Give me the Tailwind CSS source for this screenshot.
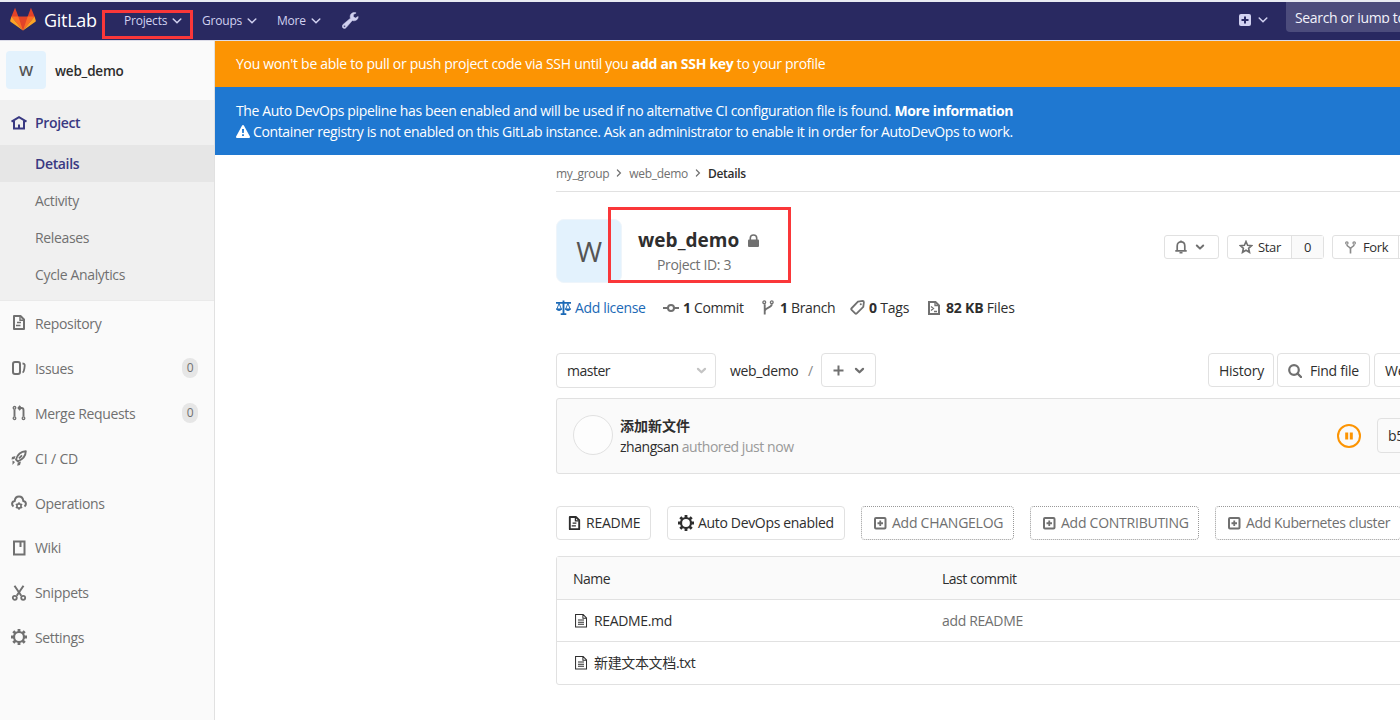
<!DOCTYPE html>
<html lang="en">
  <head>
    <meta charset="UTF-8" />
    <meta name="viewport" content="width=device-width, initial-scale=1.0" />
    <title>web_demo · GitLab</title>
    <script src="https://cdn.jsdelivr.net/npm/@tailwindcss/browser@4"></script>
  </head>
  <body class="relative h-screen overflow-hidden bg-white font-['Open_Sans','Noto_Sans_CJK_SC',sans-serif] text-sm tracking-[-0.35px] text-[#2e2e2e]">
    <!-- Icon sprite -->
    <svg class="hidden">
      <symbol id="chevron" viewBox="0 0 10 10"><path d="M1.2 3l3.8 3.8L8.800 3" fill="none" stroke="currentColor" stroke-width="1.5" stroke-linecap="round" /></symbol>
      <symbol id="angle" viewBox="0 0 10 10"><path d="M1.800 3.500l3.200 3.100 3.200-3.100" fill="none" stroke="currentColor" stroke-width="2" stroke-linecap="round" stroke-linejoin="round" /></symbol>
      <symbol id="doc" viewBox="0 0 16 16"><path d="M3 1h6.500L13 4.500V14H3z" fill="none" stroke="currentColor" stroke-width="2" stroke-linejoin="round" /><path d="M6 7.500h4M5 10.500h4.500M9 2v3.200h3" fill="none" stroke="currentColor" stroke-width="1.4" /></symbol>
      <symbol id="branch" viewBox="0 0 16 16"><g fill="none" stroke="currentColor" stroke-width="1.400"><circle cx="4" cy="2.500" r="1.500" /><circle cx="12" cy="2.500" r="1.500" /><path stroke-width="2" d="M4.500 4.500v11M12 4.500c0 4-6.500 3-7.500 7" /></g></symbol>
      <symbol id="gear" viewBox="0 0 16 16"><circle cx="8" cy="8" r="5" fill="none" stroke="currentColor" stroke-width="2.200" /><path d="M8 0v3M8 13v3M0 8h3M13 8h3M2.300 2.300l2 2M11.700 11.700l2 2M2.300 13.700l2-2M11.700 4.300l2-2" stroke="currentColor" stroke-width="2.800" /></symbol>
      <symbol id="plus-square" viewBox="0 0 16 16"><rect x="3" y="3" width="10.500" height="10.500" rx="1" fill="none" stroke="currentColor" stroke-width="2" /><path d="M8.250 5.500v5.500M5.500 8.250h5.500" stroke="currentColor" stroke-width="1.800" /></symbol>
      <symbol id="file-o" viewBox="0 0 14 15"><path d="M.6.6h8.200l3.600 3.600v9.800H.6zM8.500.6v4h4M3.200 6.500h6.500M3.200 8.800h6.500M3.200 11.100h6.500" fill="none" stroke="currentColor" stroke-width="1.100" /></symbol>
    </svg>

    <!-- Top navigation -->
    <header class="flex h-[41px] items-start border-t-2 border-b border-t-[#e8eaf2] border-b-[#dcdce8] bg-[#292961] text-[#d1d1f0]">
      <div class="flex h-[38px] w-[102px] items-center pl-[10px]">
        <svg class="-mt-1 h-6 w-[26px]" viewBox="0 0 36 33">
          <path fill="#e24329" d="M2 13l16 19.500L34 13 29 .800 24.500 13h-13L7 .800z" />
          <path fill="#fc6d26" d="M2 13L18 32.500 11.500 13zM34 13L18 32.500 24.500 13z" />
          <path fill="#fca326" d="M2 13L.3 18.500c-.2.700 0 1.300.500 1.700L18 32.500zM34 13l1.700 5.500c.2.700 0 1.300-.5 1.700L18 32.500z" />
        </svg>
        <span class="ml-2 text-[18px] tracking-[-0.3px] text-white">GitLab</span>
      </div>
      <nav class="flex h-[38px] items-center text-[12px] font-medium tracking-[-0.2px]">
        <a class="flex w-[80px] items-center gap-[5px] pl-[22px]">Projects <svg class="size-[10px] shrink-0"><use href="#chevron" /></svg></a>
        <a class="ml-[20px] flex w-[75px] items-center gap-[5px]">Groups <svg class="size-[10px] shrink-0"><use href="#chevron" /></svg></a>
        <a class="flex w-[64px] items-center gap-[5px]">More <svg class="size-[10px] shrink-0"><use href="#chevron" /></svg></a>
        <svg class="-mt-px ml-px size-[17px]" viewBox="0 0 16 16"><path d="M15.200 4.200l-2.600 1.500-1.900-1.200V2.400L13.300.900C11.500.100 9.400.600 8.300 2.200c-.7 1.200-.8 2.500-.3 3.600L1 11.700c-1 .9-1 2.300-.2 3.200.9.900 2.300.8 3.100-.2L9.700 8c1.400.5 3.100.2 4.300-.8 1-.900 1.300-2 1.200-3zM2.400 12.500a.9.900 0 1 1 0 1.800.9.900 0 0 1 0-1.800z" fill="currentColor" stroke="currentColor" stroke-width=".5" fill-rule="evenodd" /></svg>
      </nav>
      <div class="ml-auto flex h-full items-start">
        <svg class="mt-3 mr-[7px] h-3 w-3" viewBox="0 0 12 12"><rect width="12" height="12" rx="2" fill="currentColor" /><path d="M6 2.500v7M2.500 6h7" stroke="#292961" stroke-width="2" /></svg>
        <svg class="mt-[13px] mr-[18px] size-[10px]"><use href="#chevron" /></svg>
        <div class="h-[30px] w-[114px] overflow-hidden rounded-bl bg-[#4c4c7c] pt-[6px] pl-[9px] whitespace-nowrap text-[#f2f2fa]">
          <div class="h-[15px] overflow-hidden leading-[19px]">Search or jump to…</div>
        </div>
      </div>
    </header>

    <div class="flex h-[679px]">
      <!-- Sidebar -->
      <aside class="w-[215px] shrink-0 border-r border-[#e1e1e1] bg-[#fafafa] text-[#707070]">
        <div class="flex h-[59px] items-center pl-[6px] font-semibold text-[#2e2e2e]">
          <div class="-mt-[2px] flex h-[38px] w-10 items-center justify-center rounded bg-[#e3f2fd] pt-[3px] text-[15px] font-semibold text-[#555]">W</div>
          <span class="mt-[2px] ml-[9px] text-[13.500px] tracking-[-0.2px]">web_demo</span>
        </div>
        <div class="h-[201px] border-b border-[#eaeaea] bg-[#f0f0f0]">
          <a class="flex h-[45px] items-center gap-2 pl-[11px] font-semibold text-[#393982]">
            <svg class="size-4" viewBox="0 0 16 16"><path d="M.5 6.700L8 2.200l7.500 4.500M3 6v7.500h10V6M8 13V9.500" fill="none" stroke="currentColor" stroke-width="2" /></svg>
            Project
          </a>
          <a class="flex h-[37px] items-center bg-[#e6e6e6] pl-[35px] font-semibold text-[#393982]">Details</a>
          <a class="flex h-[37px] items-center pl-[35px]">Activity</a>
          <a class="flex h-[37px] items-center pl-[35px]">Releases</a>
          <a class="flex h-[37px] items-center pl-[35px]">Cycle Analytics</a>
        </div>
        <a class="mt-px flex h-[44.800px] items-center gap-2 pl-[11px]">
          <svg class="-mt-[2px] size-4"><use href="#doc" /></svg>
          Repository
        </a>
        <a class="flex h-[44.800px] items-center gap-2 pl-[11px]">
          <svg class="-mt-[2px] size-4" viewBox="0 0 16 16"><rect x="2" y="2" width="7" height="12" rx="2" fill="none" stroke="currentColor" stroke-width="2" /><path d="M11.500 3.500c2.500 0 2.500 1.500 2 4-.4 3-.5 4.500-2 5" fill="none" stroke="currentColor" stroke-width="1.800" /></svg>
          Issues
          <span class="-mt-[2px] mr-4 ml-auto flex h-5 w-4 items-center justify-center rounded-full bg-[#e6e6e6] text-xs">0</span>
        </a>
        <a class="flex h-[44.800px] items-center gap-2 pl-[11px]">
          <svg class="-mt-[2px] size-4" viewBox="0 0 16 16"><g fill="none" stroke="currentColor" stroke-width="1.300"><circle cx="3.500" cy="2.800" r="1.300" /><circle cx="3.500" cy="13.200" r="1.300" /><circle cx="12.500" cy="13.200" r="1.300" /><path stroke-width="1.900" d="M3.500 4.500v7M12.500 11.500V5c0-1.200-.8-2-2-2H8.500M9.300.800L7.500 3l1.800 2" /></g></svg>
          Merge Requests
          <span class="-mt-[2px] mr-4 ml-auto flex h-5 w-4 items-center justify-center rounded-full bg-[#e6e6e6] text-xs">0</span>
        </a>
        <a class="flex h-[44.800px] items-center gap-2 pl-[11px]">
          <svg class="-mt-px size-4" viewBox="0 0 16 16"><path d="M5 9.500C6.500 4.500 10 1.500 14.800 1.300 14.700 6 11.500 9.500 6.800 11.300zM8 8.300l3-3" fill="none" stroke="currentColor" stroke-width="1.900" stroke-linejoin="round" /><path d="M4.500 6L1 7l-.5 2.500 3-.5zM10 11.500L9 15l-2.800.7.6-3.200zM1.500 10.500L4 12l-2.500 3z" fill="currentColor" /></svg>
          <span class="tracking-[-0.15px]">CI / CD</span>
        </a>
        <a class="flex h-[44.800px] items-center gap-2 pl-[11px]">
          <svg class="-mt-px size-4" viewBox="0 0 16 16"><path d="M2.500 11.500C.5 10 .5 6.500 3.700 6 4.300 0 11.700 0 12.300 6c3.200.5 3.200 4 1.200 5.500" fill="none" stroke="currentColor" stroke-width="2" /><circle cx="8" cy="11" r="2.100" fill="none" stroke="currentColor" stroke-width="1.600" /><path d="M8 7.300v1.500M8 13.200v1.500M4.800 9.200l1.300.700M9.900 12.100l1.300.7M4.800 12.800l1.300-.7M9.900 9.900l1.300-.7" stroke="currentColor" stroke-width="1.500" /></svg>
          Operations
        </a>
        <a class="flex h-[44.800px] items-center gap-2 pl-[11px]">
          <svg class="-mt-px size-4" viewBox="0 0 16 16"><rect x="3" y="1.500" width="10.500" height="13" fill="none" stroke="currentColor" stroke-width="2" /><path d="M9.500 2v5" stroke="currentColor" stroke-width="2" /></svg>
          Wiki
        </a>
        <a class="flex h-[44.800px] items-center gap-2 pl-[11px]">
          <svg class="-mt-px size-4" viewBox="0 0 16 16"><path d="M3.500.800l6.800 10M12.500.800L5.700 10.800" stroke="currentColor" stroke-width="2" /><circle cx="3.800" cy="12.800" r="2" fill="none" stroke="currentColor" stroke-width="1.800" /><circle cx="12.200" cy="12.800" r="2" fill="none" stroke="currentColor" stroke-width="1.800" /></svg>
          Snippets
        </a>
        <a class="flex h-[44.800px] items-center gap-2 pl-[11px]">
          <svg class="-mt-px size-4"><use href="#gear" /></svg>
          Settings
        </a>
      </aside>

      <main class="flex-1 overflow-hidden whitespace-nowrap">
        <!-- Banners -->
        <div class="flex h-[46px] items-center bg-[#fc9403] pl-[21px] text-white">
          <p class="tracking-[-0.29px]">You won't be able to pull or push project code via SSH until you <b>add an SSH key</b> to your profile</p>
        </div>
        <div class="h-[68px] bg-[#1f78d1] pt-[13px] pl-[21px] leading-[21px] text-white">
          <p class="tracking-[-0.36px]">The Auto DevOps pipeline has been enabled and will be used if no alternative CI configuration file is found. <b>More information</b></p>
          <p class="flex items-center gap-[3px] tracking-[-0.37px]">
            <svg class="h-[13px] w-[14px]" viewBox="0 0 14 13"><path d="M7 0c.4 0 .7.200.9.500l6 11c.4.700-.1 1.500-.9 1.500H1c-.8 0-1.300-.8-.9-1.500l6-11C6.300.200 6.600 0 7 0zM6 4l.2 4h1.600L8 4zM6.100 9.200V11h1.800V9.200z" fill="currentColor" fill-rule="evenodd" /></svg>
            Container registry is not enabled on this GitLab instance. Ask an administrator to enable it in order for AutoDevOps to work.
          </p>
        </div>

        <div class="ml-[341px] w-[990px]">
          <!-- Breadcrumbs -->
          <div class="flex h-[37px] items-center border-b border-[#e1e1e1] pt-[2px] text-xs tracking-[-0.3px] text-[#707070]">
            <span>my_group</span>
            <svg class="-mt-[3px] mx-[6px] size-2 -rotate-90"><use href="#chevron" /></svg>
            <span>web_demo</span>
            <svg class="-mt-[3px] mx-[6px] size-2 -rotate-90"><use href="#chevron" /></svg>
            <span class="font-semibold text-[#2e2e2e]">Details</span>
          </div>

          <!-- Project header -->
          <div class="flex pt-[27px]">
            <div class="flex h-16 w-[66px] items-center justify-center rounded-lg border border-[#eef5fb] bg-[#e3f2fd] text-[28px] text-[#555]">W</div>
            <div class="ml-[16px] w-[526px] pt-[7px]">
              <h1 class="flex h-[29px] items-center text-[19px] font-bold tracking-[0.05px]">
                web_demo
                <svg class="ml-[9px] h-[13px] w-[11px] text-[#707070]" viewBox="0 0 11 13"><rect y="5.500" width="11" height="7.500" rx="1" fill="currentColor" /><path d="M2.300 6V4c0-4 6.400-4 6.400 0v2" fill="none" stroke="currentColor" stroke-width="1.600" /></svg>
              </h1>
              <p class="ml-[19px] leading-5 text-[#707070]">Project ID: 3</p>
            </div>
            <div class="mt-4 flex h-6 text-[13px]">
              <button class="flex w-[55px] items-center justify-center gap-2 rounded-[3px] border border-[#e1e1e1] text-[#707070]">
                <svg class="-ml-[3px] h-[14px] w-3" viewBox="0 0 12 14"><path d="M.3 10.900h11.400M2.200 10.500V6c0-5.500 7.600-5.500 7.600 0v4.500" fill="none" stroke="currentColor" stroke-width="1.700" /><path d="M4.500 12h3v1.500h-3zM5.200.500h1.600V2H5.200z" fill="currentColor" /></svg>
                <svg class="size-[10px]"><use href="#angle" /></svg>
              </button>
              <div class="ml-2 flex w-[97px] rounded-[3px] border border-[#e1e1e1]">
                <span class="flex w-[63px] items-center gap-[5px] pl-[11px]">
                  <svg class="size-[14px] shrink-0 text-[#707070]" viewBox="0 0 14 14"><path d="M7 1.500l1.600 3.700 4 .4-3 2.700.9 4L7 10.200l-3.500 2.100.9-4-3-2.700 4-.4z" fill="none" stroke="currentColor" stroke-width="1.600" /></svg>
                  Star
                </span>
                <span class="flex flex-1 items-center justify-center border-l border-[#e1e1e1] bg-[#fafafa]">0</span>
              </div>
              <div class="ml-2 flex w-[100px] rounded-[3px] border border-[#e1e1e1]">
                <span class="flex w-[66px] items-center gap-[6px] border-r border-[#e1e1e1] pl-[11px]"><svg class="size-[13px] shrink-0 text-[#8a8a8a]" viewBox="0 0 16 16"><g fill="none" stroke="currentColor" stroke-width="1.500"><circle cx="3.500" cy="2.500" r="1.500" /><circle cx="12.500" cy="2.500" r="1.500" /><path stroke-width="2" d="M3.500 4.500C4 8 8 6.500 8 10v5.500M12.500 4.500C12 8 8 6.500 8 10" /></g></svg>Fork</span>
              </div>
            </div>
          </div>

          <!-- Stats -->
          <div class="flex h-[35px] items-center pt-[15px]">
            <a class="flex w-[107px] items-center gap-1 text-[#1b69b6]">
              <svg class="-mt-px h-4 w-[15px]" viewBox="0 0 16 16"><path d="M0 2.500h16M8 0v14M5 14.500h6" stroke="currentColor" stroke-width="2" fill="none" /><path d="M3.300 3L.8 9.500h5zM12.700 3l-2.500 6.500h5z" stroke="currentColor" stroke-width="1" fill="none" /><path d="M0 8.500h6.500c-.5 3.500-6 3.500-6.500 0zM9.500 8.500H16c-.5 3.500-6 3.500-6.500 0z" fill="currentColor" /></svg>
              Add license
            </a>
            <a class="flex w-[98px] items-center gap-1">
              <svg class="-mt-px size-4 text-[#707070]" viewBox="0 0 16 16"><circle cx="8" cy="8" r="3" fill="none" stroke="currentColor" stroke-width="2" /><path d="M0 8h5M11 8h5" stroke="currentColor" stroke-width="2" /></svg>
              <span><b>1</b> Commit</span>
            </a>
            <a class="flex w-[89px] items-center gap-[3px]">
              <svg class="-mt-[2px] -ml-px mr-px h-[15px] w-4 text-[#707070]"><use href="#branch" /></svg>
              <span><b>1</b> Branch</span>
            </a>
            <a class="flex w-[77px] items-center gap-1 tracking-[-0.2px]">
              <svg class="-mt-px size-[15px] text-[#707070]" viewBox="0 0 16 16"><path d="M8.500 1.800l5-.8c.8 0 1.300.5 1.300 1.300l-.6 5-7 7c-.5.500-1.200.5-1.700 0L1.700 10.500c-.5-.5-.5-1.200 0-1.700z" fill="none" stroke="currentColor" stroke-width="1.900" /><circle cx="11.500" cy="4.500" r="1.100" fill="currentColor" /></svg>
              <span><b>0</b> Tags</span>
            </a>
            <a class="-ml-px flex items-center gap-1 tracking-[-0.2px]">
              <svg class="-mt-px size-4 text-[#707070]" viewBox="0 0 16 16"><path d="M3 2h6.500L13 5.500V14H3z" fill="none" stroke="currentColor" stroke-width="2" /><path d="M5 6.500l2.500 2L5 10.500M8 11.500h3M9 2v3.500h3" fill="none" stroke="currentColor" stroke-width="1.300" /></svg>
              <span><b>82 KB</b> Files</span>
            </a>
          </div>

          <!-- Tree controls -->
          <div class="mt-[35px] flex h-[35px]">
            <div class="flex w-[160px] items-center justify-between rounded border border-[#e1e1e1] pr-[8px] pl-[10px]">
              <span class="pt-px tracking-[-0.5px]">master</span>
              <svg class="size-[11px] text-[#c4c4c4]"><use href="#angle" /></svg>
            </div>
            <span class="ml-[14px] flex w-[78px] items-center">web_demo</span>
            <span class="flex w-[13px] items-center text-[#888]">/</span>
            <button class="flex h-[34px] w-[55px] items-center justify-center gap-[10px] rounded border border-[#e1e1e1] text-[#707070]">
              <svg class="size-[11px]" viewBox="0 0 11 11"><path d="M5.500.500v10M.5 5.500h10" stroke="currentColor" stroke-width="2" /></svg>
              <svg class="size-[11px]"><use href="#angle" /></svg>
            </button>
            <div class="ml-[332px] flex h-[34px] gap-[3px] tracking-[-0.25px]">
              <button class="flex w-[66px] shrink-0 items-center rounded border border-[#e1e1e1] pt-[2px] pl-[10px]">History</button>
              <button class="flex w-[93px] shrink-0 items-center gap-2 rounded border border-[#e1e1e1] pt-[2px] pl-[10px]">
                <svg class="size-[14px] text-[#707070]" viewBox="0 0 14 14"><circle cx="6" cy="6" r="4.800" fill="none" stroke="currentColor" stroke-width="2.200" /><path d="M9.500 9.500l3.500 3.500" stroke="currentColor" stroke-width="2.400" stroke-linecap="round" /></svg>
                Find file
              </button>
              <button class="ml-px flex w-[90px] shrink-0 items-center rounded border border-[#e1e1e1] pt-[2px] pl-[10px]">Web IDE</button>
            </div>
          </div>

          <!-- Last commit -->
          <div class="mt-[10px] flex h-[76px] items-center rounded-[3px] border border-[#e1e1e1] bg-[#fafafa] pl-4">
            <div class="mt-[-2px] size-10 rounded-full border border-[#e1e1e1] bg-[#fdfdfd]"></div>
            <div class="ml-[7px] w-[717px] leading-[21px]">
              <p class="font-bold tracking-normal">添加新文件</p>
              <p class="tracking-[-0.45px]">zhangsan <span class="text-[#999]">authored just now</span></p>
            </div>
            <svg class="-mt-px size-6 text-[#fc9403]" viewBox="0 0 24 24"><circle cx="12" cy="12" r="11" fill="none" stroke="currentColor" stroke-width="2" /><path d="M9.700 8.500v7M14.300 8.500v7" stroke="currentColor" stroke-width="3" /></svg>
            <div class="-mt-px ml-4 flex h-[35px] w-[90px] items-center rounded border border-[#e1e1e1] pl-[10px]">b5a2c7f1</div>
          </div>

          <!-- Quick setup buttons -->
          <div class="mt-8 flex h-[34px] gap-4 tracking-[-0.25px]">
            <button class="flex w-[95px] shrink-0 items-center gap-1 rounded border border-[#e1e1e1] pl-[10px]"><svg class="size-[15px] shrink-0"><use href="#doc" /></svg>README</button>
            <button class="flex w-[178px] shrink-0 items-center gap-1 rounded border border-[#e1e1e1] pl-[10px] tracking-[-0.33px]"><svg class="size-4 shrink-0"><use href="#gear" /></svg>Auto DevOps enabled</button>
            <button class="flex w-[153px] shrink-0 items-center gap-1 rounded border border-dotted border-[#999] pl-[10px] text-[#707070]"><svg class="size-4 shrink-0"><use href="#plus-square" /></svg>Add CHANGELOG</button>
            <button class="flex w-[169px] shrink-0 items-center gap-1 rounded border border-dotted border-[#999] pl-[10px] text-[#707070]"><svg class="size-4 shrink-0"><use href="#plus-square" /></svg>Add CONTRIBUTING</button>
            <button class="flex w-[186px] shrink-0 items-center gap-1 rounded border border-dotted border-[#999] pl-[10px] tracking-[-0.39px] text-[#707070]"><svg class="size-4 shrink-0"><use href="#plus-square" /></svg>Add Kubernetes cluster</button>
          </div>

          <!-- Files -->
          <div class="mt-4 rounded-[3px] border border-[#e1e1e1]">
            <div class="flex h-[43px] items-center border-b border-[#e1e1e1] bg-[#fafafa] pt-[2px] pl-4 tracking-[-0.5px]">
              <span class="w-[369px]">Name</span>
              <span>Last commit</span>
            </div>
            <div class="flex h-[42px] items-center border-b border-[#e1e1e1] pl-[18px]">
              <span class="flex w-[367px] items-center gap-[6px]"><svg class="h-[14px] w-[13px]"><use href="#file-o" /></svg>README.md</span>
              <span class="text-[#707070]">add README</span>
            </div>
            <div class="flex h-[42px] items-center pl-[18px]">
              <span class="flex items-center gap-[6px]"><svg class="h-[14px] w-[13px]"><use href="#file-o" /></svg>新建文本文档.txt</span>
            </div>
          </div>
        </div>
      </main>
    </div>

    <!-- Highlight boxes -->
    <div class="absolute top-[10px] left-[102px] h-[29px] w-[91px] border-3 border-[#fa3739]"></div>
    <div class="absolute top-[207px] left-[608px] h-[76px] w-[183px] border-3 border-[#fa3739]"></div>
  </body>
</html>
